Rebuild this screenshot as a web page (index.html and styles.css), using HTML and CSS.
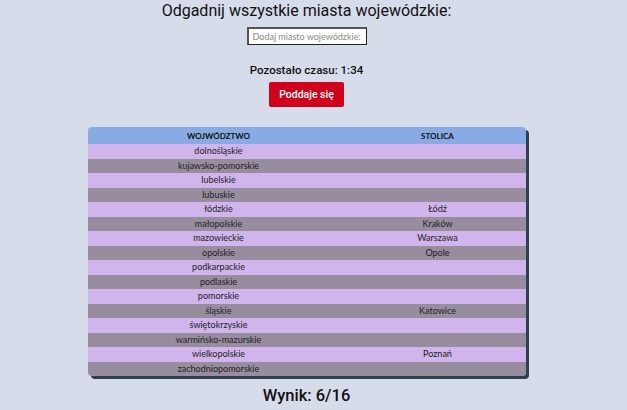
FILE: index.html
```html
<!DOCTYPE html>
<html lang="pl">
<head>
<meta charset="utf-8">
<link rel="stylesheet" href="styles.css">
</head>
<body>
<div class="page">
  <h1 class="title">Odgadnij wszystkie miasta wojewódzkie:</h1>
  <input class="guess" type="text" placeholder="Dodaj miasto wojewódzkie:">
  <p class="timer">Pozostało czasu: 1:34</p>
  <button class="giveup">Poddaje się</button>
  <div class="table-wrap">
    <table class="cities">
      <thead>
        <tr><th class="c1">WOJWÓDZTWO</th><th class="c2">STOLICA</th></tr>
      </thead>
      <tbody>
        <tr><td>dolnośląskie</td><td></td></tr>
        <tr><td>kujawsko-pomorskie</td><td></td></tr>
        <tr><td>lubelskie</td><td></td></tr>
        <tr><td>lubuskie</td><td></td></tr>
        <tr><td>łódzkie</td><td>Łódź</td></tr>
        <tr><td>małopolskie</td><td>Kraków</td></tr>
        <tr><td>mazowieckie</td><td>Warszawa</td></tr>
        <tr><td>opolskie</td><td>Opole</td></tr>
        <tr><td>podkarpackie</td><td></td></tr>
        <tr><td>podlaskie</td><td></td></tr>
        <tr><td>pomorskie</td><td></td></tr>
        <tr><td>śląskie</td><td>Katowice</td></tr>
        <tr><td>świętokrzyskie</td><td></td></tr>
        <tr><td>warmińsko-mazurskie</td><td></td></tr>
        <tr><td>wielkopolskie</td><td>Poznań</td></tr>
        <tr><td>zachodniopomorskie</td><td></td></tr>
      </tbody>
    </table>
  </div>
  <p class="score">Wynik: 6/16</p>
</div>
</body>
</html>
```
FILE: styles.css
```css
html, body {
  margin: 0;
  padding: 0;
  background: #d6dcea;
}
body {
  font-family: "Lato", "Open Sans", sans-serif;
  color: #111;
}
.page {
  width: 613px;
  display: flex;
  flex-direction: column;
  align-items: center;
  padding-top: 0;
}
.title {
  margin: 0;
  font-family: "Roboto", "Lato", sans-serif;
  font-size: 16px;
  font-weight: 400;
  line-height: 22px;
  color: #111;
}
.guess {
  margin-top: 5px;
  width: 120px;
  height: 18px;
  box-sizing: border-box;
  border: 1px solid #222;
  border-left: 2px solid #555;
  border-top: 2px solid #555;
  background: #fff;
  padding: 0 4px;
  font-family: inherit;
  font-size: 9px;
}
.guess::placeholder {
  color: #888;
}
.timer {
  margin: 17px 0 0;
  font-family: "Roboto", "Lato", sans-serif;
  font-size: 11.5px;
  font-weight: 500;
  line-height: 16px;
}
.giveup {
  margin-top: 4px;
  width: 75px;
  height: 25px;
  border: none;
  border-radius: 2px;
  background: #d0021b;
  color: #fff;
  font-family: "Roboto", "Lato", sans-serif;
  font-size: 10.5px;
  font-weight: 500;
  padding: 0;
}
.table-wrap {
  margin-top: 20px;
  width: 438px;
  border-radius: 4px;
  overflow: hidden;
  box-shadow: 3px 3px 0 #2f4055;
}
.cities {
  width: 100%;
  border-collapse: collapse;
  font-size: 9px;
  color: #222;
}
.cities th {
  background: #88abe6;
  height: 17px;
  padding: 0;
  font-weight: 700;
  font-size: 8px;
  color: #111;
}
.cities .c1 { width: 262px; }
.cities td {
  height: 14.5px;
  padding: 0;
  text-align: center;
  line-height: 14px;
}
.cities tbody tr:nth-child(odd) { background: #d0b4ec; }
.cities tbody tr:nth-child(even) { background: #978d9e; }
.score {
  margin: 9px 0 0;
  font-family: "Roboto", "Lato", sans-serif;
  font-size: 16.5px;
  font-weight: 500;
  line-height: 22px;
}
```
